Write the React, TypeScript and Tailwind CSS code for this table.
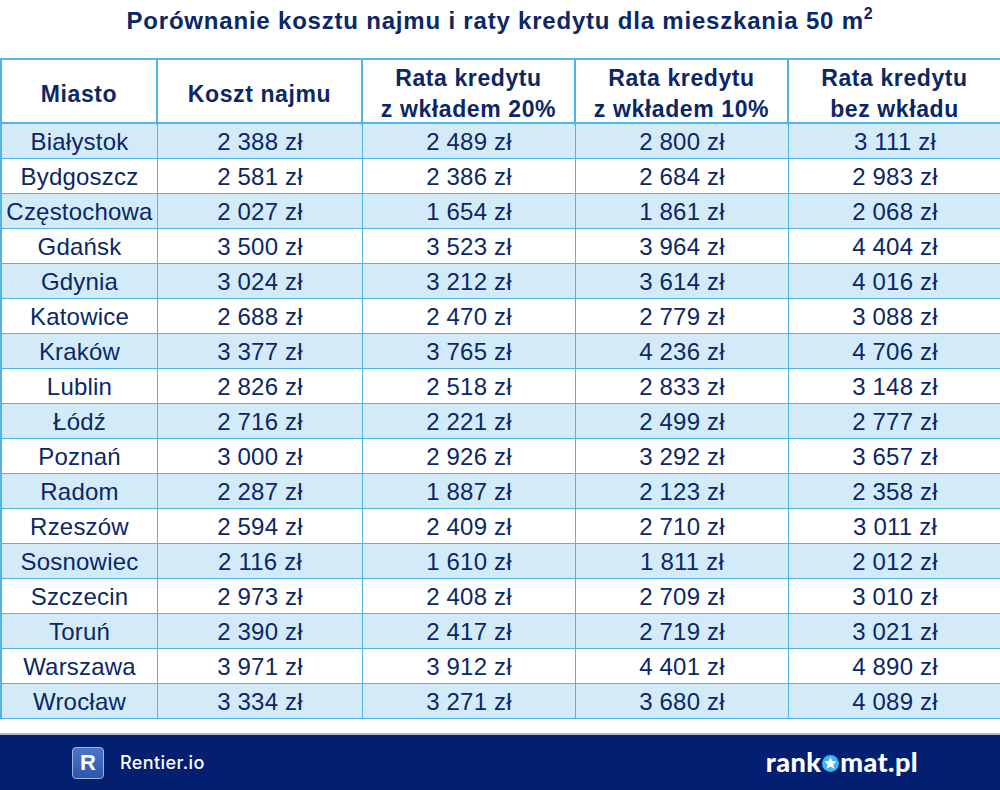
import React from 'react';

const rows: [string, string, string, string, string][] = [
  ['Białystok', '2 388 zł', '2 489 zł', '2 800 zł', '3 111 zł'],
  ['Bydgoszcz', '2 581 zł', '2 386 zł', '2 684 zł', '2 983 zł'],
  ['Częstochowa', '2 027 zł', '1 654 zł', '1 861 zł', '2 068 zł'],
  ['Gdańsk', '3 500 zł', '3 523 zł', '3 964 zł', '4 404 zł'],
  ['Gdynia', '3 024 zł', '3 212 zł', '3 614 zł', '4 016 zł'],
  ['Katowice', '2 688 zł', '2 470 zł', '2 779 zł', '3 088 zł'],
  ['Kraków', '3 377 zł', '3 765 zł', '4 236 zł', '4 706 zł'],
  ['Lublin', '2 826 zł', '2 518 zł', '2 833 zł', '3 148 zł'],
  ['Łódź', '2 716 zł', '2 221 zł', '2 499 zł', '2 777 zł'],
  ['Poznań', '3 000 zł', '2 926 zł', '3 292 zł', '3 657 zł'],
  ['Radom', '2 287 zł', '1 887 zł', '2 123 zł', '2 358 zł'],
  ['Rzeszów', '2 594 zł', '2 409 zł', '2 710 zł', '3 011 zł'],
  ['Sosnowiec', '2 116 zł', '1 610 zł', '1 811 zł', '2 012 zł'],
  ['Szczecin', '2 973 zł', '2 408 zł', '2 709 zł', '3 010 zł'],
  ['Toruń', '2 390 zł', '2 417 zł', '2 719 zł', '3 021 zł'],
  ['Warszawa', '3 971 zł', '3 912 zł', '4 401 zł', '4 890 zł'],
  ['Wrocław', '3 334 zł', '3 271 zł', '3 680 zł', '4 089 zł'],
];

const cols = 'grid grid-cols-[156px_205px_213px_213px_213px]';
const head =
  'flex items-center justify-center text-center border-r-2 border-[#4fb4e8] font-bold text-[23px] tracking-[0.6px] leading-[31px] pt-[3px]';

export default function App() {
  return (
    <div
      className="w-[1000px] h-[790px] bg-white flex flex-col text-[#0b2766] overflow-hidden"
      style={{ fontFamily: '"Liberation Sans", Arial, sans-serif' }}
    >
      {/* Title */}
      <div className="h-[58px] flex items-center justify-center pb-[16px]">
        <h1 className="text-[24px] font-bold tracking-[0.8px] leading-none">
          Porównanie kosztu najmu i raty kredytu dla mieszkania 50 m
          <sup className="text-[16px] relative -top-[10px] align-baseline">2</sup>
        </h1>
      </div>

      {/* Table */}
      <div className="border-t-2 border-l-2 border-[#4fb4e8]">
        <div className={`${cols} h-[64px] border-b-2 border-[#4fb4e8] bg-white`}>
          <div className={head}>Miasto</div>
          <div className={head}>Koszt najmu</div>
          <div className={head}>
            Rata kredytu
            <br />z wkładem 20%
          </div>
          <div className={head}>
            Rata kredytu
            <br />z wkładem 10%
          </div>
          <div className={head}>
            Rata kredytu
            <br />
            bez wkładu
          </div>
        </div>
        {rows.map((r, i) => (
          <div
            key={r[0]}
            className={`${cols} h-[35px] border-b-[1.5px] border-[#4fb4e8] ${i % 2 === 0 ? 'bg-[#d3ebf8]' : 'bg-white'}`}
          >
            {r.map((c, j) => (
              <div
                key={j}
                className="flex items-center justify-center border-r-[1.5px] border-[#4fb4e8] text-[24px] tracking-[0.2px] leading-none pt-[1px]"
              >
                {c}
              </div>
            ))}
          </div>
        ))}
      </div>

      <div className="flex-1" />

      {/* Footer */}
      <div className="h-[57px] bg-[#031f71] border-t-2 border-[#aab6d4] flex items-center justify-between pl-[72px] pr-[82px]">
        <div className="flex items-center gap-[16px]">
          <div className="w-[32px] h-[32px] rounded-[4px] border border-[#9fb4e0] bg-gradient-to-b from-[#4d75c9] to-[#2d55aa] flex items-center justify-center text-white font-bold text-[22px] leading-none">
            R
          </div>
          <span
            className="text-white text-[18px] font-medium tracking-[0.4px]"
            style={{ fontFamily: 'Inter, "Liberation Sans", sans-serif' }}
          >
            Rentier.io
          </span>
        </div>
        <div
          className="flex items-center text-white text-[27px] leading-none tracking-[0.4px] pb-[2px]"
          style={{ fontFamily: 'Lato, "Liberation Sans", sans-serif', fontWeight: 900 }}
        >
          <span>rank</span>
          <svg width="17" height="17" viewBox="0 0 20 20" className="mx-[1px] mt-[4px]">
            <circle cx="10" cy="10" r="10" fill="#3cb5f2" />
            <path
              d="M10 2.6 L12.1 7.2 L17.1 7.7 L13.3 11.1 L14.4 16.1 L10 13.5 L5.6 16.1 L6.7 11.1 L2.9 7.7 L7.9 7.2 Z"
              fill="white"
            />
          </svg>
          <span>mat.pl</span>
        </div>
      </div>
    </div>
  );
}
